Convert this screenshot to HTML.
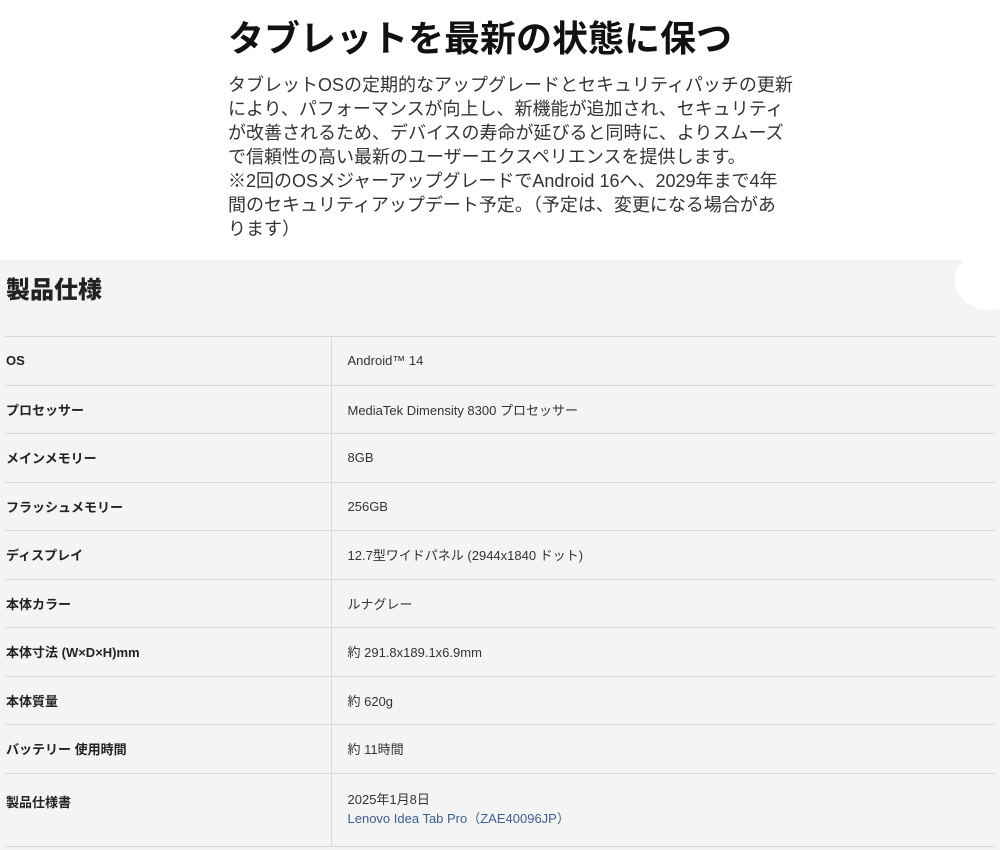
<!DOCTYPE html>
<html><head><meta charset="utf-8"><style>
body{margin:0;width:1000px;height:850px;background:#fff;font-family:"Liberation Sans","Noto Sans CJK JP",sans-serif;overflow:hidden;position:relative}
.top{position:absolute;left:228px;top:14px}
h1{margin:0;font-size:36px;font-weight:bold;color:#111;line-height:50px;letter-spacing:0}
.p{margin-top:9px;font-size:18px;line-height:24px;color:#333;white-space:nowrap}
.gray{position:absolute;left:0;top:260px;width:1000px;height:590px;background:#f4f4f4}
.blob{position:absolute;left:955px;top:250px;width:70px;height:60px;background:#fff;border-radius:50%}
h2{position:absolute;left:6px;top:270px;margin:0;font-size:24px;font-weight:900;color:#222}
table{position:absolute;left:5px;top:336px;width:990px;border-collapse:collapse;font-size:13px;color:#222}
td{border-top:1px solid #d8d8d8;height:48.5px;padding:0;vertical-align:middle;box-sizing:border-box}
td.k{width:326px;font-weight:bold;padding-left:1px}
td.v{border-left:1px solid #d8d8d8;padding-left:16px;color:#333}
tr.last td{height:73px;border-bottom:1px solid #d8d8d8;vertical-align:top;padding-top:16px}
a{color:#3c5d96;text-decoration:none}
</style></head><body>
<div class="top">
<h1>タブレットを最新の状態に保つ</h1>
<div class="p">タブレットOSの定期的なアップグレードとセキュリティパッチの更新<br>により、パフォーマンスが向上し、新機能が追加され、セキュリティ<br>が改善されるため、デバイスの寿命が延びると同時に、よりスムーズ<br>で信頼性の高い最新のユーザーエクスペリエンスを提供します。<br>※2回のOSメジャーアップグレードでAndroid 16へ、2029年まで4年<br>間のセキュリティアップデート予定。（予定は、変更になる場合があ<br>ります）</div>
</div>
<div class="gray"></div>
<div class="blob"></div>
<h2>製品仕様</h2>
<table>
<tr><td class="k">OS</td><td class="v">Android™ 14</td></tr>
<tr><td class="k">プロセッサー</td><td class="v">MediaTek Dimensity 8300 プロセッサー</td></tr>
<tr><td class="k">メインメモリー</td><td class="v">8GB</td></tr>
<tr><td class="k">フラッシュメモリー</td><td class="v">256GB</td></tr>
<tr><td class="k">ディスプレイ</td><td class="v">12.7型ワイドパネル (2944x1840 ドット)</td></tr>
<tr><td class="k">本体カラー</td><td class="v">ルナグレー</td></tr>
<tr><td class="k">本体寸法 (W×D×H)mm</td><td class="v">約 291.8x189.1x6.9mm</td></tr>
<tr><td class="k">本体質量</td><td class="v">約 620g</td></tr>
<tr><td class="k">バッテリー 使用時間</td><td class="v">約 11時間</td></tr>
<tr class="last"><td class="k" style="padding-top:18px">製品仕様書</td><td class="v" style="line-height:19px">2025年1月8日<br><a>Lenovo Idea Tab Pro（ZAE40096JP）</a></td></tr>
</table>
</body></html>
